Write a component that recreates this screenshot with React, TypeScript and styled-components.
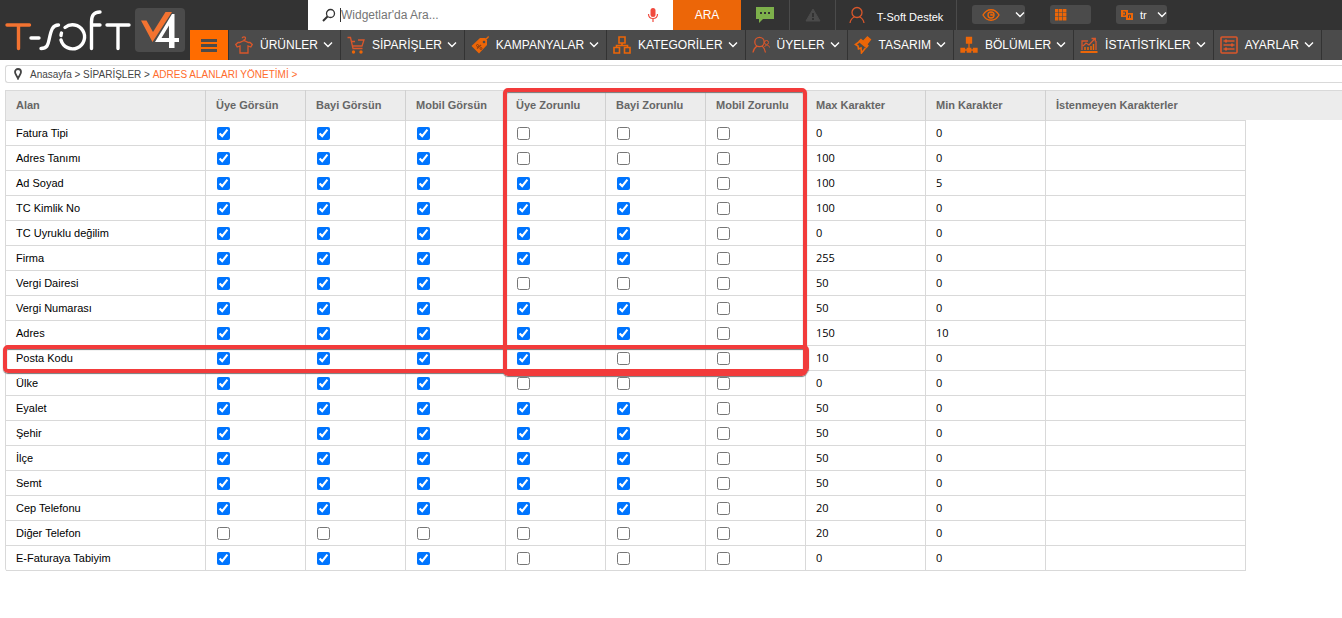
import React from "react";
import styled, { createGlobalStyle } from "styled-components";

const GlobalStyle = createGlobalStyle`
  *, *::before, *::after { box-sizing: border-box; }
  body {
    margin: 0;
    background: #fff;
    color: #000;
    font-family: "Liberation Sans", Arial, sans-serif;
    font-size: 11px;
    overflow-x: hidden;
  }
`;

const Header = styled.header`
  display: flex;
  height: 60px;
  background: #333;
`;

const Logo = styled.a`
  flex: none;
  width: 190px;
  svg { display: block; }
`;

const HeaderRows = styled.div`
  flex: 1;
  min-width: 0;
`;

const TopBar = styled.div`
  display: flex;
  height: 30px;
  padding-left: 118px;
`;

const SearchForm = styled.form`
  display: flex;
  width: 433px;
  background: #fff;
`;

const SearchField = styled.label`
  display: flex;
  flex: 1;
  align-items: center;
  padding: 0 14px;
`;

const SearchInput = styled.input`
  flex: 1;
  min-width: 0;
  margin-left: 4px;
  padding: 0;
  border: 0;
  border-left: 1px solid #333;
  outline: 0;
  background: none;
  height: 14px;
  font: 12px "Liberation Sans", Arial, sans-serif;
  &::placeholder { color: #757575; opacity: 1; }
`;

const SearchButton = styled.button`
  width: 68px;
  border: 0;
  padding: 0;
  background: #ec6608;
  color: #fff;
  font: 12px "Liberation Sans", Arial, sans-serif;
`;

const TopItem = styled.a<{ $width: number }>`
  display: flex;
  align-items: center;
  justify-content: center;
  gap: 12px;
  width: ${(p) => p.$width}px;
  border-right: 1px solid #4b4b4b;
  color: #fff;
  font-size: 11px;
  text-decoration: none;
`;

const UserName = styled.span`
  padding-top: 4px;
`;

const Tools = styled.div`
  display: flex;
  align-items: flex-start;
  padding: 5px 0 0 15px;
  gap: 25px;
`;

const ToolButton = styled.button<{ $width: number }>`
  display: flex;
  align-items: center;
  gap: 7px;
  width: ${(p) => p.$width}px;
  height: 19px;
  padding: 0 0 0 5px;
  border: 0;
  border-radius: 3px;
  background: #4b4b4b;
  color: #fff;
  font: 11px "Liberation Sans", Arial, sans-serif;
`;

const ToolArrow = styled.span`
  display: flex;
  margin-left: auto;
`;

const Menu = styled.nav`
  display: flex;
  height: 30px;
  background: #4b4b4b;
`;

const MenuToggle = styled.button`
  display: flex;
  align-items: center;
  justify-content: center;
  width: 39px;
  padding: 0;
  border: 0;
  border-right: 1px solid #333;
  background: #ff6c00;
`;

const MenuItem = styled.a`
  display: flex;
  flex: none;
  align-items: center;
  padding: 0 7px 0 6px;
  border-right: 1px solid #333;
  color: #fff;
  font-size: 12px;
  line-height: 30px;
  text-decoration: none;
`;

const MenuText = styled.span`
  margin: 0 5px 0 7px;
`;

const Breadcrumb = styled.nav`
  display: flex;
  align-items: center;
  height: 18px;
  margin: 5px 0 7px 5px;
  padding-left: 8px;
  border: 1px solid #d9d9d9;
  border-right: 0;
  border-radius: 3px 0 0 3px;
  color: #444;
  font-size: 10px;
  white-space: pre;
  svg { margin-right: 8px; }
`;

const Crumb = styled.a<{ $active?: boolean }>`
  color: ${(p) => (p.$active ? "#ff6c2c" : "#444")};
  text-decoration: none;
`;

const TableArea = styled.main`
  position: relative;
  margin-left: 5px;
  background: linear-gradient(#d9d9d9 1px, #ececec 1px) 0 0 / 100% 30px no-repeat;
`;

const Table = styled.table`
  width: 1241px;
  table-layout: fixed;
  border-collapse: separate;
  border-spacing: 0;
  border-left: 1px solid #d9d9d9;
  border-radius: 0 3px 3px 3px;
`;

const HeadCell = styled.th<{ $last?: boolean }>`
  height: 31px;
  padding: 0 10px;
  border-bottom: 1px solid #d9d9d9;
  border-right: ${(p) => (p.$last ? "0" : "1px solid #d0d0d0")};
  color: #666;
  text-align: left;
  white-space: nowrap;
`;

const Cell = styled.td`
  height: 25px;
  padding: 0 10px;
  border-bottom: 1px solid #d9d9d9;
  border-right: 1px solid #d9d9d9;
`;

const NumberCell = styled(Cell)`
  padding-bottom: 2px;
  font-family: "Open Sans", Tahoma, sans-serif;
`;

const CheckCell = styled(Cell)`
  padding: 0 11px;
`;

const Check = styled.input`
  display: block;
  width: 13px;
  height: 13px;
  margin: 0;
`;

const ColumnMark = styled.div`
  position: absolute;
  top: -2px;
  left: 498px;
  width: 304px;
  height: 288px;
  border: 4px solid #f23b3b;
  border-radius: 5px;
  box-shadow: 0 1px 1px #777, inset 0 1px 1px #777;
  pointer-events: none;
`;

const RowMark = styled(ColumnMark)`
  top: 255px;
  left: -2px;
  width: 806px;
  height: 28px;
`;

const OR = "#ec6608";

const Chevron = () => (
  <svg width="10" height="8" viewBox="0 0 10 8" fill="none" stroke="#fff" strokeWidth="1.4">
    <path d="M1 1.5 5 5.5 9 1.5" />
  </svg>
);

const LogoArt = () => (
  <svg width="190" height="60" viewBox="0 0 190 60" fill="none" strokeLinecap="round" strokeWidth="3.4">
    <rect x="135" y="8" width="50" height="44" rx="4" fill="#4b4b4b" />
    <g stroke="#f37331">
      <path d="M7 25H29.500M18.500 25V48.500" />
    </g>
    <g stroke="#fff">
      <path d="M31 38H39M41 48.500C47 48.500 48 45 49 40C51 31 52 25 58.500 25" />
      <path d="M65 27.500A12 12 0 1 1 61 40" />
      <path d="M61 35.500A12 12 0 0 1 61.500 33" />
      <path d="M91.500 48.500V22C91.500 15 94 12 100 12M92 25H100M107 25H129M118 25V48.500" />
    </g>
    <path d="M141 20.500H146.500L153 32L165.500 12H172L152.500 42Z" fill="#f37331" />
    <path d="M174.500 14V38H179V42H174.500V48H169V42H155L172 14ZM169 25.500 161.500 38H169Z" fill="#fff" fillRule="evenodd" />
  </svg>
);

const RED = "#d9572b";

const icons: Record<string, React.ReactNode> = {
  shirt: (
    <path
      stroke={RED}
      d="M9 5.500V4C11 3.500 11 .8 9 .8C8 .8 7.300 1.300 7.300 2.200M9 4.500 4.500 6.500H3L.8 8.500 2.200 11 5 10V17H13V10L15.800 11 17.200 8.500 15 6.500H13.500Z"
    />
  ),
  cart: (
    <>
      <path stroke={RED} d="M.5 1.500H3.500L6 12.500H15.500M4.500 5.500H8M11 4H17L15 10H6" />
      <circle cx="6.500" cy="16" r="1.700" fill={OR} stroke="none" />
      <circle cx="14" cy="16" r="1.700" fill={OR} stroke="none" />
    </>
  ),
  tag: (
    <>
      <path d="M9 2H14L16 4V9L8 17.500 .5 10Z" fill={OR} stroke="none" />
      <path d="M12.500 6C12 3 17 3 17.500 .5" />
      <circle cx="13" cy="6" r="1.300" fill="#4b4b4b" stroke="none" />
      <path d="M6 12.500 10 9" stroke="#8f3f10" />
      <circle cx="6.500" cy="9.500" r="1" stroke="#8f3f10" strokeWidth="1" />
      <circle cx="10" cy="12.500" r="1" stroke="#8f3f10" strokeWidth="1" />
    </>
  ),
  boxes: <path d="M6 1H12V7H6ZM1 11.500H6.500V17H1ZM11.500 11.500H17V17H11.500ZM9 7V9.500M3.500 11.500V9.500H14.500V11.500" strokeWidth="1.600" />,
  users: (
    <g stroke={RED}>
      <circle cx="7.500" cy="6" r="4.700" />
      <path d="M1 16.500C1.500 13 3 11.500 5 10M10 10C12 11.500 13 13 13.500 16.500" />
      <circle cx="14.500" cy="6.500" r="2" strokeWidth="1" />
      <path d="M12.500 11C13.500 8.500 17 8.500 17.500 11.500" strokeWidth="1" />
    </g>
  ),
  brush: (
    <>
      <path d="M13.500 1 16.500 3.500 13 8 9.500 5Z" fill={OR} />
      <path d="M7 3.500 14 9.500 12.500 11.500 5 5.500Z" fill={OR} />
      <path d="M5 6 1.500 8.500 4 10 4.500 13 7 12 7.500 17 11.500 12" strokeWidth="1.600" />
    </>
  ),
  tree: (
    <>
      <path d="M6.500 1.500H11.500V7H6.500ZM1 12.500H4.500V16H1ZM7.300 12.500H10.700V16H7.300ZM13.500 12.500H17V16H13.500Z" fill={OR} />
      <path d="M9 7V12M3 14H15" />
    </>
  ),
  chart: (
    <g stroke={RED}>
      <path d="M.5 16H17.500" strokeWidth="2" stroke={OR} />
      <path d="M2 14V5H8M16 5V14M3 10 6 7 9 9 15 2.500M11.500 2.500H15.300V5.500" />
      <path d="M5 11V14M8 11V14M11 10V14M13.500 8V14" strokeWidth="1.500" stroke={OR} />
    </g>
  ),
  sliders: (
    <g stroke={RED}>
      <rect x="1" y="1" width="16" height="16" rx="1" strokeWidth="1.600" />
      <path d="M3.500 5H14.500M3.500 9H14.500M3.500 13H14.500" />
      <path d="M6 3.500V6.500M12 7.500V10.500M6 11.500V14.500" strokeWidth="2" />
    </g>
  ),
};

const MenuIcon = ({ name }: { name: string }) => (
  <svg width="18" height="18" viewBox="0 0 18 18" fill="none" stroke={OR} strokeWidth="1.300">
    {icons[name]}
  </svg>
);

const menu = [
  ["shirt", "ÜRÜNLER"],
  ["cart", "SİPARİŞLER"],
  ["tag", "KAMPANYALAR"],
  ["boxes", "KATEGORİLER"],
  ["users", "ÜYELER"],
  ["brush", "TASARIM"],
  ["tree", "BÖLÜMLER"],
  ["chart", "İSTATİSTİKLER"],
  ["sliders", "AYARLAR"],
];

const columns: [string, number][] = [
  ["Alan", 200],
  ["Üye Görsün", 100],
  ["Bayi Görsün", 100],
  ["Mobil Görsün", 100],
  ["Üye Zorunlu", 100],
  ["Bayi Zorunlu", 100],
  ["Mobil Zorunlu", 100],
  ["Max Karakter", 120],
  ["Min Karakter", 120],
  ["İstenmeyen Karakterler", 200],
];

const rows: [string, string, number, number][] = [
  ["Fatura Tipi", "111000", 0, 0],
  ["Adres Tanımı", "111000", 100, 0],
  ["Ad Soyad", "111110", 100, 5],
  ["TC Kimlik No", "111110", 100, 0],
  ["TC Uyruklu değilim", "111110", 0, 0],
  ["Firma", "111110", 255, 0],
  ["Vergi Dairesi", "111000", 50, 0],
  ["Vergi Numarası", "111110", 50, 0],
  ["Adres", "111110", 150, 10],
  ["Posta Kodu", "111100", 10, 0],
  ["Ülke", "111000", 0, 0],
  ["Eyalet", "111110", 50, 0],
  ["Şehir", "111110", 50, 0],
  ["İlçe", "111110", 50, 0],
  ["Semt", "111110", 50, 0],
  ["Cep Telefonu", "111110", 20, 0],
  ["Diğer Telefon", "000000", 20, 0],
  ["E-Faturaya Tabiyim", "111000", 0, 0],
];

export default function App() {
  return (
    <>
      <GlobalStyle />
      <Header>
        <Logo href="#" aria-label="T-Soft V4">
          <LogoArt />
        </Logo>
        <HeaderRows>
          <TopBar>
            <SearchForm>
              <SearchField>
                <svg width="14" height="14" viewBox="0 0 14 14" fill="none" stroke="#333" strokeWidth="1.300">
                  <circle cx="8.500" cy="5.500" r="4" />
                  <path d="M5.500 8.500 1 13" strokeWidth="2" />
                </svg>
                <SearchInput aria-label="Ara" placeholder="Widgetlar'da Ara..." />
                <svg width="12" height="16" viewBox="0 0 12 16" fill="none" stroke="#f04a3e">
                  <rect x="3.500" y="1" width="5" height="9" rx="2.500" fill="#f04a3e" stroke="none" />
                  <path d="M1.500 7C1.500 13 10.500 13 10.500 7M6 11.500V15" strokeWidth="1.200" />
                </svg>
              </SearchField>
              <SearchButton type="button">ARA</SearchButton>
            </SearchForm>
            <TopItem $width={49} href="#" aria-label="Mesajlar">
              <svg width="18" height="16" viewBox="0 0 18 16">
                <path d="M0 0H18V12H7L3 16V12H0Z" fill="#7db04b" />
                <path d="M4 5H6V7H4ZM8 5H10V7H8ZM12 5H14V7H12Z" fill="#333" />
              </svg>
            </TopItem>
            <TopItem $width={46} href="#" aria-label="Uyarılar">
              <svg width="16" height="14" viewBox="0 0 16 14">
                <path d="M8 1 15 13H1Z" fill="#4b4b4b" stroke="#4b4b4b" strokeLinejoin="round" />
                <path d="M7 5H9V9H7ZM7 10H9V12H7Z" fill="#333" />
              </svg>
            </TopItem>
            <TopItem $width={121} href="#">
              <svg width="16" height="18" viewBox="0 0 16 18" fill="none" stroke={RED} strokeWidth="1.300">
                <circle cx="8" cy="6.500" r="5" />
                <path d="M1 17C1.500 14 3 12 5.500 11M10.500 11C13 12 14.500 14 15 17" />
              </svg>
              <UserName>T-Soft Destek</UserName>
            </TopItem>
            <Tools>
              <ToolButton $width={53} type="button" aria-label="Görünüm">
                <svg width="28" height="14" viewBox="0 0 28 14" fill="none" stroke={OR} strokeWidth="1.400">
                  <path d="M6 7C10 0 18 0 22 7C18 14 10 14 6 7Z" />
                  <circle cx="14" cy="7" r="3" />
                  <path d="M14 5.500V7H16" />
                </svg>
                <ToolArrow>
                  <Chevron />
                </ToolArrow>
              </ToolButton>
              <ToolButton $width={41} type="button" aria-label="Uygulamalar">
                <svg width="12" height="12" viewBox="0 0 12 12" fill={OR}>
                  <path d="M0 0H3.400V3.400H0ZM4 0H7.400V3.400H4ZM8 0H11.400V3.400H8ZM0 4H3.400V7.400H0ZM4 4H7.400V7.400H4ZM8 4H11.400V7.400H8ZM0 8H3.400V11.400H0ZM4 8H7.400V11.400H4ZM8 8H11.400V11.400H8Z" />
                </svg>
              </ToolButton>
              <ToolButton $width={51} type="button">
                <svg width="12" height="12" viewBox="0 0 12 12" fill={OR}>
                  <path d="M0 1H7V4H12V11H5V8H0Z" />
                  <path d="M2 3H4.500V6H2M7.500 9V6H9.500V9" stroke="#4b4b4b" fill="none" />
                </svg>
                tr
                <ToolArrow>
                  <Chevron />
                </ToolArrow>
              </ToolButton>
            </Tools>
          </TopBar>
          <Menu>
            <MenuToggle type="button" aria-label="Menü">
              <svg width="16" height="13" viewBox="0 0 16 13" fill="#4b4b4b">
                <path d="M0 0H16V3H0ZM0 5H16V8H0ZM0 10H16V13H0Z" />
              </svg>
            </MenuToggle>
            {menu.map(([icon, text]) => (
              <MenuItem href="#" key={text}>
                <MenuIcon name={icon} />
                <MenuText>{text}</MenuText>
                <Chevron />
              </MenuItem>
            ))}
          </Menu>
        </HeaderRows>
      </Header>
      <Breadcrumb>
        <svg width="8" height="12" viewBox="0 0 8 12" fill="none" stroke="#444" strokeWidth="1.800">
          <path d="M4 10.500C3 8 1 6 1 4A3 3 0 0 1 7 4C7 6 5 8 4 10.500Z" />
        </svg>
        <Crumb href="#">Anasayfa</Crumb>
        {" > "}
        <Crumb href="#">SİPARİŞLER</Crumb>
        {" > "}
        <Crumb href="#" $active>
          {"ADRES ALANLARI YÖNETİMİ >"}
        </Crumb>
      </Breadcrumb>
      <TableArea>
        <Table>
          <colgroup>
            {columns.map(([name, width]) => (
              <col key={name} width={width} />
            ))}
          </colgroup>
          <thead>
            <tr>
              {columns.map(([name], i) => (
                <HeadCell key={name} scope="col" $last={i === columns.length - 1}>
                  {name}
                </HeadCell>
              ))}
            </tr>
          </thead>
          <tbody>
            {rows.map(([name, checks, max, min]) => (
              <tr key={name}>
                <Cell>{name}</Cell>
                {checks.split("").map((c, i) => (
                  <CheckCell key={i}>
                    <Check type="checkbox" defaultChecked={c === "1"} aria-label={`${name} ${columns[i + 1][0]}`} />
                  </CheckCell>
                ))}
                <NumberCell>{max}</NumberCell>
                <NumberCell>{min}</NumberCell>
                <Cell />
              </tr>
            ))}
          </tbody>
        </Table>
        <RowMark />
        <ColumnMark />
      </TableArea>
    </>
  );
}
